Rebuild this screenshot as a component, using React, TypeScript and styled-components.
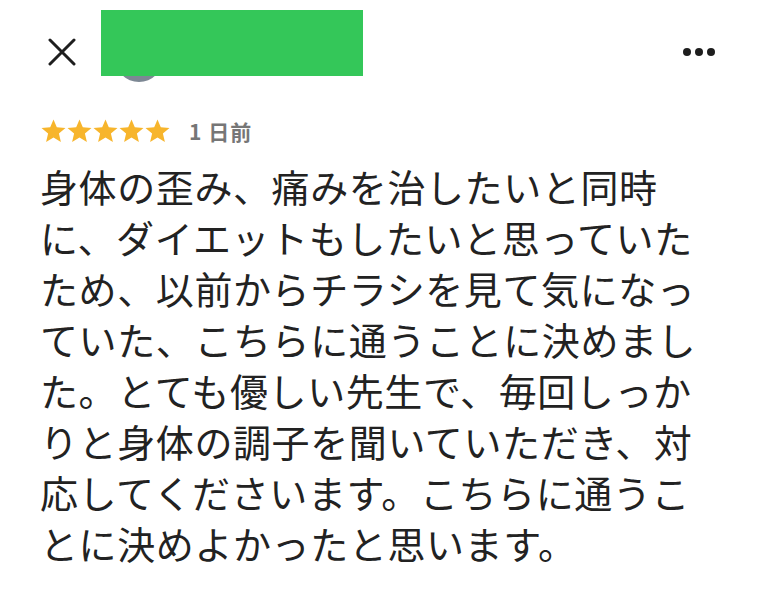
import React from "react"
import styled, { createGlobalStyle } from "styled-components"

const GlobalStyle = createGlobalStyle`
  html, body {
    margin: 0;
    padding: 0;
    background: #ffffff;
  }
  body {
    font-family: "Noto Sans CJK JP", "Noto Sans", sans-serif;
    color: #1e1e1e;
  }
`

const review = {
  rating: 5,
  date: "1 日前",
  text:
    "身体の歪み、痛みを治したいと同時に、ダイエットもしたいと思っていたため、以前からチラシを見て気になっていた、こちらに通うことに決めました。とても優しい先生で、毎回しっかりと身体の調子を聞いていただき、対応してくださいます。こちらに通うことに決めよかったと思います。",
}

const Page = styled.div`
  width: 760px;
  height: 598px;
  background: #fff;
  overflow: hidden;
`

const Header = styled.div`
  height: 104px;
  display: flex;
  align-items: center;
  padding: 0 45px 0 48px;
`

const CloseButton = styled.button`
  width: 28px;
  height: 28px;
  padding: 0;
  border: none;
  background: none;
  display: flex;
  align-items: center;
  justify-content: center;
`

const AvatarWrap = styled.div`
  position: relative;
  margin-left: 39px;
  margin-top: 12px;
`

const Avatar = styled.div`
  width: 48px;
  height: 48px;
  border-radius: 50%;
  background: #7d8894;
`

// green block that hides the reviewer name
const Censor = styled.div`
  position: absolute;
  left: -14px;
  top: -24px;
  width: 262px;
  height: 66px;
  background: #34c759;
`

const Spacer = styled.div`
  flex: 1;
`

const MoreButton = styled.button`
  display: flex;
  gap: 4px;
  padding: 0;
  border: none;
  background: none;
`

const Dot = styled.span`
  width: 8px;
  height: 8px;
  border-radius: 50%;
  background: #1e1e1e;
`

const MetaRow = styled.div`
  display: flex;
  align-items: center;
  height: 26px;
  margin-top: 14px;
  padding-left: 41px;
`

const Stars = styled.div`
  display: flex;
  gap: 1px;
`

const DateText = styled.span`
  margin-left: 19px;
  font-size: 21px;
  font-weight: 700;
  color: #767676;
  letter-spacing: 1px;
`

const Body = styled.p`
  margin: 16px 0 0;
  padding-left: 40px;
  width: 662px;
  font-size: 38px;
  line-height: 51px;
  letter-spacing: 0.6px;
  font-weight: 400;
  color: #222;
`

const Star = () => (
  <svg width="25" height="24" viewBox="0 0 25 24">
    <polygon
      fill="#f7b52c"
      points="12.5,0.5 15.8,8.2 24.5,8.9 17.9,14.5 19.9,23 12.5,18.5 5.1,23 7.1,14.5 0.5,8.9 9.2,8.2"
    />
  </svg>
)

export default function App() {
  return (
    <Page>
      <GlobalStyle />
      <Header>
        <CloseButton aria-label="閉じる">
          <svg width="28" height="28" viewBox="0 0 28 28">
            <path d="M2 2 L26 26 M26 2 L2 26" stroke="#1e1e1e" strokeWidth="3" strokeLinecap="round" />
          </svg>
        </CloseButton>
        <AvatarWrap>
          <Avatar />
          <Censor />
        </AvatarWrap>
        <Spacer />
        <MoreButton aria-label="その他">
          <Dot />
          <Dot />
          <Dot />
        </MoreButton>
      </Header>
      <MetaRow>
        <Stars>
          {Array.from({ length: review.rating }).map((_, i) => (
            <Star key={i} />
          ))}
        </Stars>
        <DateText>{review.date}</DateText>
      </MetaRow>
      <Body>{review.text}</Body>
    </Page>
  )
}
